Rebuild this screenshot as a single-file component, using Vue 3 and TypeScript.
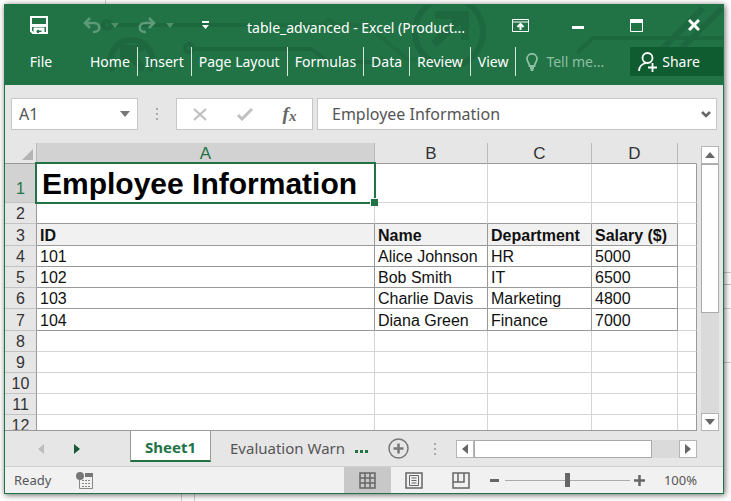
<script setup lang="ts">
import { computed, ref } from 'vue'

interface SheetRow {
  n: number
  kind: 'title' | 'blank' | 'head' | 'data' | 'last'
  cells: string[]
}

const columns = ['A', 'B', 'C', 'D', '']
const rows: SheetRow[] = [
  { n: 1, kind: 'title', cells: ['Employee Information', '', '', '', ''] },
  { n: 2, kind: 'blank', cells: ['', '', '', '', ''] },
  { n: 3, kind: 'head', cells: ['ID', 'Name', 'Department', 'Salary ($)', ''] },
  { n: 4, kind: 'data', cells: ['101', 'Alice Johnson', 'HR', '5000', ''] },
  { n: 5, kind: 'data', cells: ['102', 'Bob Smith', 'IT', '6500', ''] },
  { n: 6, kind: 'data', cells: ['103', 'Charlie Davis', 'Marketing', '4800', ''] },
  { n: 7, kind: 'last', cells: ['104', 'Diana Green', 'Finance', '7000', ''] },
  ...[8, 9, 10, 11, 12].map((n): SheetRow => ({ n, kind: 'blank', cells: ['', '', '', '', ''] })),
]

const tabs = ['Home', 'Insert', 'Page Layout', 'Formulas', 'Data', 'Review', 'View']
const cellName = ref('A1')
const formula = ref('Employee Information')
const zoom = ref(100)
const zoomLabel = computed(() => `${zoom.value}%`)
</script>

<template>
  <div class="desktop">
    <main class="window">
      <header class="top">
        <svg class="circuit" width="718" height="80" viewBox="0 0 718 80" fill="none" stroke="#1d683e" stroke-width="4" aria-hidden="true">
          <circle cx="102" cy="20" r="4" />
          <path d="M108 20H240" />
          <path d="M240 20H320M330 20H348L362 20L402 54H412" stroke="#1f6c41" />
          <circle cx="324" cy="19" r="4" stroke="#1f6c41" />
          <path d="M108 66A21 21 0 1 1 145 66" stroke-width="6" />
          <path d="M115 40H139V45L131 49L139 60V66H134L125 55L115 62Z" fill="#1d683e" stroke="none" />
          <circle cx="184" cy="43" r="4" />
          <path d="M190 44H306L324 57H372" />
          <circle cx="376" cy="57" r="3" stroke="#1f6c41" />
          <circle cx="444" cy="27" r="34" stroke-width="6" />
          <path d="M429 39L456 13M430 10H460V35" stroke-width="8" />
          <path d="M572 48L588 33H718" />
          <path d="M658 43L698 3M677 43L717 3" stroke-width="6" />
        </svg>
        <div class="titlebar">
          <button class="save" aria-label="Save">
            <svg width="18" height="18" viewBox="0 0 18 18" fill="none"><path d="M1 1H17V17H3L1 15Z" stroke="#fff" stroke-width="2" /><path d="M2 8H16V11H2Z" fill="#fff" /><path d="M5 17V13H13V17" stroke="#fff" stroke-width="3" /><path d="M7 14H9V17H7Z" fill="#217346" /></svg>
          </button>
          <button class="hist" aria-label="Undo">
            <svg width="18" height="17" viewBox="0 0 18 17" fill="none" stroke="#5d9a78" stroke-width="2.5"><path d="M7 1L2 6L7 11M2 6H11C18 6 18 15 11 15H10" /></svg>
          </button>
          <button class="drop" aria-label="Undo list"><svg width="8" height="5" viewBox="0 0 8 5"><path d="M0 0H8L4 5Z" fill="#4f9069" /></svg></button>
          <button class="hist redo" aria-label="Redo">
            <svg width="18" height="17" viewBox="0 0 18 17" fill="none" stroke="#5d9a78" stroke-width="2.5"><path d="M11 1L16 6L11 11M16 6H7C0 6 0 15 7 15H8" /></svg>
          </button>
          <button class="drop" aria-label="Redo list"><svg width="8" height="5" viewBox="0 0 8 5"><path d="M0 0H8L4 5Z" fill="#4f9069" /></svg></button>
          <button class="customize" aria-label="Customize toolbar">
            <svg width="7" height="8" viewBox="0 0 7 8" fill="#fff"><path d="M0 0H7V2H0ZM0 4H7L3.500 8Z" /></svg>
          </button>
          <h1 class="caption">table_advanced - Excel (Product...</h1>
          <button class="win" aria-label="Ribbon display options">
            <svg width="17" height="13" viewBox="0 0 17 13" fill="none" stroke="#fff"><path d="M.5 .5H16.500V12.500H.5ZM.5 3H16.500" /><path d="M8.500 11V5M5.500 8L8.500 5L11.500 8" stroke-width="2" /></svg>
          </button>
          <button class="win" aria-label="Minimize"><svg width="12" height="13" viewBox="0 0 12 13"><path d="M0 7H12V10H0Z" fill="#fff" /></svg></button>
          <button class="win" aria-label="Maximize"><svg width="13" height="13" viewBox="0 0 13 13"><path d="M.5 .5H12.500V12.500H.5Z" fill="none" stroke="#fff" /><path d="M0 0H13V4H0Z" fill="#fff" /></svg></button>
          <button class="win" aria-label="Close"><svg width="12" height="12" viewBox="0 0 12 12"><path d="M1 1L11 11M11 1L1 11" stroke="#fff" stroke-width="3" /></svg></button>
        </div>
        <nav class="ribbon">
          <button class="file">File</button>
          <button v-for="t in tabs" :key="t" class="tab">{{ t }}</button>
          <button class="tell">
            <svg width="12" height="18" viewBox="0 0 12 18" fill="none" stroke="#8fbfa3" stroke-width="1.800"><path d="M3.500 13C3.500 10 1 9 1 5.800A5 5 0 0 1 11 5.800C11 9 8.500 10 8.500 13ZM4 15H8M4.500 17H7.500" /></svg>
            Tell me...
          </button>
          <button class="share">
            <svg width="19" height="20" viewBox="0 0 19 20" fill="none" stroke="#fff" stroke-width="1.800"><circle cx="9.500" cy="6" r="5" /><path d="M1 19C1 14 4 12 8 11M14.500 11V20M10 15.500H19" /></svg>
            Share
          </button>
        </nav>
      </header>

      <section class="formula-bar">
        <label class="box name"><input v-model="cellName" aria-label="Name box" /><svg width="10" height="6" viewBox="0 0 10 6"><path d="M0 0H10L5 6Z" fill="#777" /></svg></label>
        <span class="dots"><i></i><i></i><i></i></span>
        <div class="box tools">
          <button aria-label="Cancel"><svg width="14" height="13" viewBox="0 0 14 13"><path d="M1 1L13 12M13 1L1 12" stroke="#bdbdbd" stroke-width="2" /></svg></button>
          <button aria-label="Enter"><svg width="16" height="13" viewBox="0 0 16 13" fill="none"><path d="M1 7L5 11L15 1" stroke="#c0c0c0" stroke-width="3" /></svg></button>
          <button class="fx" aria-label="Insert function"><em>f</em><em class="sub">x</em></button>
        </div>
        <label class="box entry"><input v-model="formula" aria-label="Formula" /><svg width="10" height="7" viewBox="0 0 10 7" fill="none"><path d="M1 1L5 5L9 1" stroke="#666" stroke-width="2.500" /></svg></label>
      </section>

      <section class="work">
        <div class="grid">
          <table>
            <colgroup><col class="c-num" /><col /><col class="c-b" /><col class="c-c" /><col class="c-d" /><col class="c-e" /></colgroup>
            <thead>
              <tr>
                <th class="corner"><svg width="11" height="11" viewBox="0 0 11 11"><path d="M11 0V11H0Z" fill="#b4b4b4" /></svg></th>
                <th v-for="(c, i) in columns" :key="i" scope="col" :class="{ active: i === 0 }">{{ c }}</th>
              </tr>
            </thead>
            <tbody>
              <tr v-for="r in rows" :key="r.n" :class="r.kind">
                <th scope="row" :class="{ active: r.n === 1 }">{{ r.n }}</th>
                <td v-for="(c, i) in r.cells" :key="i" :class="{ selected: r.n === 1 && i === 0 }">{{ c }}</td>
              </tr>
            </tbody>
          </table>
        </div>
        <div class="vscroll">
          <button aria-label="Scroll up"><svg width="10" height="6" viewBox="0 0 10 6"><path d="M0 6H10L5 0Z" fill="#666" /></svg></button>
          <div class="track"><div class="thumb"></div></div>
          <button aria-label="Scroll down"><svg width="10" height="6" viewBox="0 0 10 6"><path d="M0 0H10L5 6Z" fill="#666" /></svg></button>
        </div>
      </section>

      <section class="sheets">
        <div class="sheet-nav">
          <button aria-label="Previous sheet"><svg width="6" height="10" viewBox="0 0 6 10"><path d="M6 0V10L0 5Z" fill="#bdbdbd" /></svg></button>
          <button aria-label="Next sheet"><svg width="6" height="10" viewBox="0 0 6 10"><path d="M0 0V10L6 5Z" fill="#185c37" /></svg></button>
        </div>
        <button class="sheet current">Sheet1</button>
        <button class="sheet">Evaluation Warn</button>
        <button class="more" aria-label="More sheets"><i></i><i></i><i></i></button>
        <button class="add" aria-label="New sheet"><svg width="21" height="21" viewBox="0 0 21 21" fill="none" stroke="#777"><circle cx="10.500" cy="10.500" r="9.500" stroke-width="1.500" /><path d="M10.500 5.500V15.500M5.500 10.500H15.500" stroke-width="2.500" /></svg></button>
        <span class="dots"><i></i><i></i><i></i></span>
        <div class="hscroll">
          <button aria-label="Scroll left"><svg width="6" height="10" viewBox="0 0 6 10"><path d="M6 0V10L0 5Z" fill="#666" /></svg></button>
          <div class="track"><div class="thumb"></div></div>
          <button aria-label="Scroll right"><svg width="6" height="10" viewBox="0 0 6 10"><path d="M0 0V10L6 5Z" fill="#666" /></svg></button>
        </div>
      </section>

      <footer class="status">
        <span class="ready">Ready</span>
        <button class="macro" aria-label="Record macro">
          <svg width="17" height="17" viewBox="0 0 17 17" fill="none"><path d="M3.500 8V16.500H16.500V5" stroke="#888" /><path d="M9 1H17V5H9Z" fill="#777" /><circle cx="4" cy="4" r="4" fill="#777" /><path d="M6 8.500H15M6 11.500H15M6 14.500H15" stroke="#888" stroke-dasharray="2 1" /></svg>
        </button>
        <span class="space"></span>
        <button class="view on" aria-label="Normal view"><svg width="17" height="17" viewBox="0 0 17 17" fill="none"><path d="M1 1H16V16H1ZM1 6H16M1 11H16M6 1V16M11 1V16" stroke="#666" stroke-width="1.500" /></svg></button>
        <button class="view" aria-label="Page layout view"><svg width="18" height="17" viewBox="0 0 18 17" fill="none" stroke="#666"><path d="M1 1H17V16H1Z" stroke-width="1.500" /><path d="M4.500 3.500H13.500V13.500H4.500ZM6.500 6H11.500M6.500 8.500H11.500M6.500 11H11.500" /></svg></button>
        <button class="view" aria-label="Page break preview"><svg width="18" height="17" viewBox="0 0 18 17" fill="none"><path d="M1 1H17V16H1ZM1 10H12V1M6 1V10" stroke="#666" stroke-width="1.500" /></svg></button>
        <button class="step" aria-label="Zoom out"><svg width="9" height="3" viewBox="0 0 9 3"><path d="M0 0H9V3H0Z" fill="#666" /></svg></button>
        <input v-model.number="zoom" class="slider" type="range" min="0" max="200" aria-label="Zoom" />
        <button class="step" aria-label="Zoom in"><svg width="11" height="11" viewBox="0 0 11 11"><path d="M5.500 0V11M0 5.500H11" stroke="#666" stroke-width="2.500" /></svg></button>
        <span class="percent">{{ zoomLabel }}</span>
      </footer>
    </main>
  </div>
</template>

<style>
body {
  margin: 0;
}
</style>

<style scoped>
* {
  box-sizing: border-box;
}
button {
  display: flex;
  align-items: center;
  justify-content: center;
  margin: 0;
  padding: 0;
  border: 0;
  background: none;
  color: inherit;
  font: inherit;
  white-space: nowrap;
}
svg {
  display: block;
  flex: none;
}
.desktop {
  display: flex;
  height: 100vh;
  padding: 4px 7px 7px 4px;
  background:
    linear-gradient(#ccc, #ccc) 105px 0 / 1px 4px no-repeat,
    linear-gradient(#ccc, #ccc) 181px 100% / 1px 7px no-repeat,
    linear-gradient(#ccc, #ccc) 194px 100% / 1px 7px no-repeat,
    linear-gradient(#ccc, #ccc) 100% 272px / 7px 1px no-repeat,
    linear-gradient(#bbb, #bbb) 100% 284px / 7px 1px no-repeat,
    linear-gradient(#ccc, #ccc) 100% 308px / 7px 1px no-repeat,
    linear-gradient(#ccc, #ccc) 100% 362px / 7px 1px no-repeat,
    #fff;
  font: 14px/20px 'Noto Sans', 'Open Sans', sans-serif;
}
.window {
  display: flex;
  flex: 1;
  flex-direction: column;
  min-width: 0;
  border: 1px solid #217346;
  background: #e6e6e6;
  box-shadow: 1px 1px 6px rgba(0, 0, 0, 0.6);
}
.top {
  position: relative;
  overflow: hidden;
  padding-bottom: 9px;
  background: #217346;
  color: #fff;
}
.circuit {
  position: absolute;
  top: 0;
  right: 0;
}
.titlebar,
.ribbon {
  position: relative;
  display: flex;
  align-items: stretch;
}
.titlebar {
  height: 42px;
  padding-bottom: 2px;
}
.save {
  width: 68px;
}
.hist {
  width: 38px;
}
.redo {
  margin-left: 9px;
}
.drop {
  width: 8px;
}
.customize {
  width: 30px;
  margin-left: 16px;
}
.caption {
  flex: 1;
  min-width: 0;
  margin: 0 0 0 27px;
  padding-top: 3px;
  font-size: 14px;
  font-weight: 400;
  line-height: 40px;
  white-space: nowrap;
}
.win {
  width: 58px;
}
.ribbon {
  height: 29px;
}
.file {
  width: 72px;
  margin-right: 6px;
}
.tab {
  padding: 0 7px;
  border-right: 1px solid #d5e6dc;
}
.tell {
  gap: 8px;
  margin-left: 10px;
  color: #8fbfa3;
}
.share {
  gap: 5px;
  width: 93px;
  margin-left: auto;
  padding-right: 15px;
  background: #0e5c2f;
}
.formula-bar {
  display: flex;
  align-items: center;
  height: 58px;
  padding: 0 6px;
}
.box {
  display: flex;
  align-items: center;
  height: 32px;
  border: 1px solid #c6c6c6;
  background: #fff;
  color: #555;
}
.box input {
  flex: 1;
  width: 100%;
  min-width: 0;
  padding: 0;
  border: 0;
  outline: 0;
  background: none;
  color: inherit;
  font: 16px/20px 'Noto Sans', 'Open Sans', sans-serif;
}
.name {
  width: 127px;
  padding: 0 7px;
}
.dots {
  display: flex;
  flex-direction: column;
  gap: 3px;
}
.dots i {
  width: 2px;
  height: 2px;
  background: #aaa;
}
.formula-bar .dots {
  margin: 0 18px;
}
.tools {
  width: 137px;
}
.tools button {
  flex: 1;
}
.fx {
  color: #666;
  font: bold 19px/24px 'Liberation Serif', serif;
}
.sub {
  padding-top: 4px;
  font-size: 15px;
}
.entry {
  flex: 1;
  margin-left: 4px;
  padding: 0 5px 0 14px;
}
.work {
  display: flex;
  flex: 1;
  gap: 4px;
  min-height: 0;
  padding-right: 4px;
}
.grid {
  flex: 1;
  min-width: 0;
  overflow: hidden;
  border-bottom: 1px solid #999;
}
table {
  width: 100%;
  border-spacing: 0;
  table-layout: fixed;
  color: #111;
  font: 16px/18px 'Liberation Sans', Arial, sans-serif;
}
.c-num {
  width: 32px;
}
.c-b {
  width: 113px;
}
.c-c {
  width: 104px;
}
.c-d {
  width: 86px;
}
.c-e {
  width: 19px;
}
th,
td {
  height: 21px;
  padding: 2px 0 0 3px;
  border: solid #d4d4d4;
  border-width: 0 1px 1px 0;
  text-align: left;
  white-space: nowrap;
}
td {
  background: #fff;
}
td:last-child {
  border-right-color: #999;
}
th {
  padding: 2px 0 0;
  background: #e6e6e6;
  color: #333;
  font-weight: 400;
  text-align: center;
}
tbody th {
  border-color: #c3c3c3;
  border-right-color: #999;
}
thead th {
  border-color: #bbb;
  border-bottom-color: #999;
  font-size: 17px;
}
thead th:last-child {
  border-right-color: #e6e6e6;
}
thead .corner {
  padding-left: 17px;
}
th.active {
  background: #d2d2d2;
  color: #217346;
}
.title th,
.title td {
  height: 39px;
}
.title th {
  padding-top: 12px;
}
.title td {
  padding-left: 5px;
  color: #000;
  font-size: 30px;
  font-weight: 700;
  line-height: 36px;
}
.selected {
  position: relative;
}
.selected::before {
  position: absolute;
  inset: -2px;
  border: 2px solid #217346;
  content: '';
}
.selected::after {
  position: absolute;
  right: -4px;
  bottom: -4px;
  width: 7px;
  height: 7px;
  border: solid #fff;
  border-width: 1px 0 0 1px;
  background: #217346;
  content: '';
}
.head td,
.last td {
  height: 22px;
}
.head td:not(:last-child),
.data td:not(:last-child),
.last td:not(:last-child) {
  border-color: #999;
}
.title + .blank td:not(:last-child) {
  border-bottom-color: #999;
}
.head td {
  font-weight: 700;
}
.head td:not(:last-child) {
  background: #f1f1f1;
}
.vscroll {
  display: flex;
  flex-direction: column;
  width: 18px;
  padding-top: 3px;
}
.vscroll button,
.hscroll button {
  flex: none;
  width: 18px;
  height: 18px;
  border: 1px solid #b5b5b5;
  background: #fff;
}
.track {
  flex: 1;
  background: #dadada;
}
.thumb {
  border: 1px solid #aaa;
  background: #fff;
}
.vscroll .thumb {
  height: 60%;
}
.hscroll .thumb {
  width: 87%;
  height: 18px;
}
.sheets {
  display: flex;
  align-items: center;
  height: 35px;
  padding-right: 26px;
  font-size: 15px;
}
.sheet-nav {
  display: flex;
  width: 125px;
  padding-left: 18px;
}
.sheet-nav button {
  width: 36px;
  height: 30px;
}
.sheet {
  align-self: flex-start;
  height: 31px;
  padding: 2px 10px 0 19px;
  color: #555;
}
.current {
  padding: 2px 14px 0;
  border: solid #999;
  border-width: 0 1px 2px;
  border-bottom-color: #217346;
  background: #fff;
  color: #217346;
  font-weight: 700;
}
.more {
  gap: 2px;
  height: 20px;
  padding-top: 6px;
}
.more i {
  width: 3px;
  height: 3px;
  background: #217346;
}
.add {
  margin: 0 25px 0 20px;
}
.hscroll {
  display: flex;
  flex: 1;
  margin-left: 20px;
}
.status {
  display: flex;
  align-items: center;
  height: 27px;
  padding: 0 26px 0 9px;
  border-top: 1px solid #d0d0d0;
  background: #f1f1f1;
  color: #555;
  font-size: 13px;
}
.macro {
  margin-left: 25px;
}
.space {
  flex: 1;
}
.view {
  align-self: stretch;
  width: 47px;
}
.on {
  background: #c8c8c8;
}
.step {
  width: 20px;
  height: 20px;
}
.slider {
  width: 125px;
  height: 14px;
  margin: 0;
  appearance: none;
  background: linear-gradient(#aaa, #aaa) center / 100% 1px no-repeat;
}
.slider::-webkit-slider-thumb {
  width: 5px;
  height: 14px;
  appearance: none;
  background: #666;
}
.percent {
  margin-left: 14px;
}
</style>
